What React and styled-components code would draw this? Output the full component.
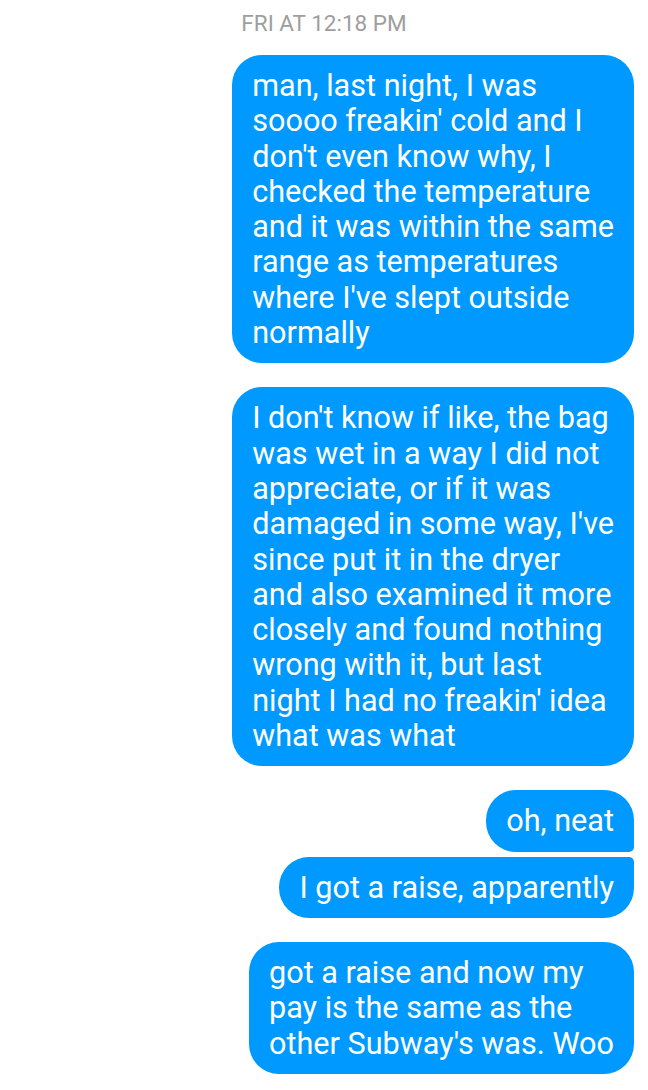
import React from "react";
import styled, { createGlobalStyle } from "styled-components";

const GlobalStyle = createGlobalStyle`
  html, body {
    margin: 0;
    padding: 0;
    background: #ffffff;
  }
  body {
    font-family: Roboto, "Noto Sans", "Liberation Sans", sans-serif;
  }
`;

const Thread = styled.div`
  display: flex;
  flex-direction: column;
  padding: 10px 14px 0 14px;
`;

const Stamp = styled.div`
  text-align: center;
  color: #9e9e9e;
  font-size: 22.5px;
  line-height: 26px;
  margin-bottom: 19px;
`;

const Group = styled.div`
  display: flex;
  flex-direction: column;
  align-items: flex-end;
  gap: 5px;
  & + & {
    margin-top: 24px;
  }
`;

const Bubble = styled.div`
  background: #0099ff;
  color: #ffffff;
  font-size: 30.6px;
  line-height: 35.3px;
  padding: 13px 20px;
  border-radius: 30px;
  border-top-right-radius: ${(p) => (p.$top ? "30px" : "5px")};
  border-bottom-right-radius: ${(p) => (p.$bottom ? "30px" : "5px")};
  white-space: nowrap;
`;

const groups = [
  [
    [
      "man, last night, I was",
      "soooo freakin' cold and I",
      "don't even know why, I",
      "checked the temperature",
      "and it was within the same",
      "range as temperatures",
      "where I've slept outside",
      "normally",
    ],
  ],
  [
    [
      "I don't know if like, the bag",
      "was wet in a way I did not",
      "appreciate, or if it was",
      "damaged in some way, I've",
      "since put it in the dryer",
      "and also examined it more",
      "closely and found nothing",
      "wrong with it, but last",
      "night I had no freakin' idea",
      "what was what",
    ],
  ],
  [["oh, neat"], ["I got a raise, apparently"]],
  [
    [
      "got a raise and now my",
      "pay is the same as the",
      "other Subway's was. Woo",
    ],
  ],
];

export default function App() {
  return (
    <>
      <GlobalStyle />
      <Thread>
        <Stamp>FRI AT 12:18 PM</Stamp>
        {groups.map((msgs, gi) => (
          <Group key={gi}>
            {msgs.map((lines, mi) => (
              <Bubble key={mi} $top={mi === 0} $bottom={mi === msgs.length - 1}>
                {lines.map((l, li) => (
                  <React.Fragment key={li}>
                    {li > 0 && <br />}
                    {l}
                  </React.Fragment>
                ))}
              </Bubble>
            ))}
          </Group>
        ))}
      </Thread>
    </>
  );
}
